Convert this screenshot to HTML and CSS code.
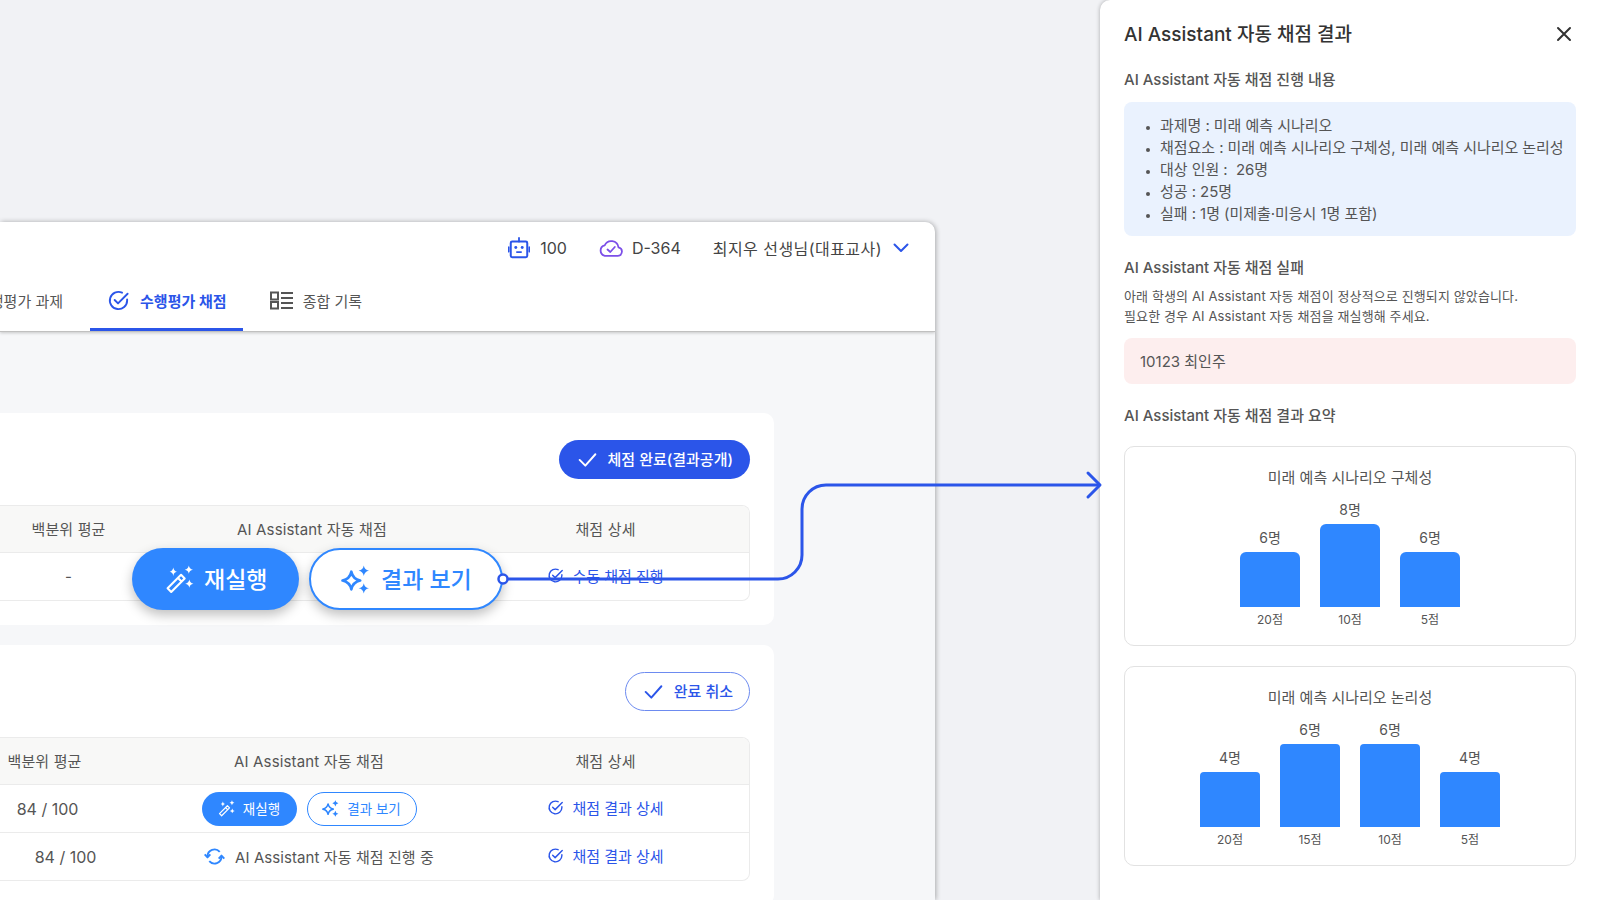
FILE: index.html
```html
<!DOCTYPE html>
<html lang="ko">
  <head>
    <title>AI Assistant 자동 채점 결과</title>
    <link rel="stylesheet" href="styles.css">
  </head>
  <body>
    <svg class="sprites" width="0" height="0">
      <symbol id="check-circle" viewBox="0 0 24 24">
        <path d="M21 11v1a9 9 0 1 1-5.300-8.200" fill="none" stroke="currentColor" stroke-width="2" stroke-linecap="round"/>
        <path d="M8 11.500l3.500 3.500L21.500 5" fill="none" stroke="currentColor" stroke-width="2" stroke-linecap="round" stroke-linejoin="round"/>
      </symbol>
      <symbol id="check" viewBox="0 0 24 24">
        <path d="M3 12.500l6.500 6.500L21 6" fill="none" stroke="currentColor" stroke-width="2.200" stroke-linecap="round" stroke-linejoin="round"/>
      </symbol>
      <symbol id="wand" viewBox="0 0 28 28">
        <path d="M2.500 22.500L15.500 9.500l3.500 3.500L6 26zM12.500 12.500l3.500 3.500" fill="none" stroke="currentColor" stroke-width="2" stroke-linejoin="round"/>
        <path d="M8 2.500Q8.500 6 11.500 6.500 8.500 7 8 10.500 7.500 7 4.500 6.500 7.500 6 8 2.500zM23 0.500Q23.500 4 27 4.500 23.500 5 23 8.500 22.500 5 19 4.500 22.500 4 23 0.500zM23.500 14Q24 17.500 27.500 18 24 18.500 23.500 22 23 18.500 19.500 18 23 17.500 23.500 14z" fill="currentColor"/>
      </symbol>
      <symbol id="sparkles" viewBox="0 0 28 28">
        <path d="M10 6.500Q11.500 13.500 18.500 15 11.500 16.500 10 23.500 8.500 16.500 1.500 15 8.500 13.500 10 6.500z" fill="none" stroke="currentColor" stroke-width="2.600" stroke-linejoin="round"/>
        <path d="M22 0.500Q22.700 4.800 27 5.500 22.700 6.200 22 10.500 21.300 6.200 17 5.500 21.300 4.800 22 0.500zM22 17.500Q22.700 21.800 27 22.500 22.700 23.200 22 27.500 21.300 23.200 17 22.500 21.300 21.800 22 17.500z" fill="currentColor"/>
      </symbol>
    </svg>

    <div class="stage">
      <div class="app">
        <header class="app-head">
          <div class="topbar">
            <svg class="ic-robot" viewBox="0 0 24 24">
              <path d="M12 1v4" stroke="currentColor" stroke-width="2" stroke-linecap="round"/>
              <rect x="3" y="5" width="18" height="17" rx="1.500" fill="none" stroke="currentColor" stroke-width="2.200"/>
              <path d="M0.800 11v5M23.200 11v5" stroke="currentColor" stroke-width="1.800" stroke-linecap="round"/>
              <circle cx="8.500" cy="11.500" r="1.600" fill="currentColor"/>
              <circle cx="15.500" cy="11.500" r="1.600" fill="currentColor"/>
              <path d="M9 16.500h6" stroke="currentColor" stroke-width="1.800"/>
            </svg>
            <span class="top-num">100</span>
            <svg class="ic-cloud" viewBox="0 0 24 18">
              <path d="M5.800 16.800h12.700a4.300 4.300 0 0 0 1-8.500 7.300 7.300 0 0 0-13.800-2A5.400 5.400 0 0 0 5.800 16.800z" fill="none" stroke="currentColor" stroke-width="1.800" stroke-linejoin="round"/>
              <path d="M8.500 10.500l2.800 2.500 4.500-5" fill="none" stroke="currentColor" stroke-width="1.800" stroke-linecap="round" stroke-linejoin="round"/>
            </svg>
            <span class="top-num">D-364</span>
            <span class="top-user">최지우 선생님(대표교사)</span>
            <svg class="ic-chevron" viewBox="0 0 16 10">
              <path d="M1.500 1.500L8 8l6.500-6.500" fill="none" stroke="currentColor" stroke-width="2" stroke-linecap="round" stroke-linejoin="round"/>
            </svg>
          </div>
          <nav class="tabs">
            <a class="tab">
              <svg class="tab-icon"><use href="#check-circle"/></svg>
              수행평가 과제
            </a>
            <a class="tab tab-on">
              <svg class="tab-icon"><use href="#check-circle"/></svg>
              수행평가 채점
            </a>
            <a class="tab">
              <svg class="tab-icon" viewBox="0 0 23 18">
                <path d="M1 1h7v7H1zM1 10.500h7v6.500H1z" fill="none" stroke="currentColor" stroke-width="2"/>
                <path d="M11 1.500h12M11 6.500h12M11 11.500h12M11 16.500h12" stroke="currentColor" stroke-width="1.800"/>
              </svg>
              종합 기록
            </a>
          </nav>
        </header>

        <main class="content">
          <section class="card">
            <div class="card-actions">
              <button class="pill pill-solid">
                <svg class="pill-icon"><use href="#check"/></svg>
                체점 완료(결과공개)
              </button>
            </div>
            <div class="table table-a">
              <div class="row row-head">
                <div>백분위 평균</div>
                <div>AI Assistant 자동 채점</div>
                <div>채점 상세</div>
              </div>
              <div class="row">
                <div>-</div>
                <div></div>
                <div><a class="link"><svg class="link-icon"><use href="#check-circle"/></svg>수동 채점 진행</a></div>
              </div>
            </div>
          </section>

          <section class="card">
            <div class="card-actions">
              <button class="pill pill-line">
                <svg class="pill-icon"><use href="#check"/></svg>
                완료 취소
              </button>
            </div>
            <div class="table table-b">
              <div class="row row-head">
                <div class="pull-head">백분위 평균</div>
                <div>AI Assistant 자동 채점</div>
                <div>채점 상세</div>
              </div>
              <div class="row">
                <div class="num pull-cell">84 / 100</div>
                <div class="btn-cell">
                  <button class="mini mini-solid"><svg class="mini-icon"><use href="#wand"/></svg>재실행</button>
                  <button class="mini mini-line"><svg class="mini-icon"><use href="#sparkles"/></svg>결과 보기</button>
                </div>
                <div><a class="link"><svg class="link-icon"><use href="#check-circle"/></svg>채점 결과 상세</a></div>
              </div>
              <div class="row">
                <div class="num">84 / 100</div>
                <div class="running">
                  <svg class="ic-sync" viewBox="0 0 24 24">
                    <path d="M4 12a8 8 0 0 1 14-5.300M20 12a8 8 0 0 1-14 5.300" fill="none" stroke="currentColor" stroke-width="2.200"/>
                    <path d="M0.800 9.500L4 13l3.200-3.500M16.800 14.500L20 11l3.200 3.500" fill="none" stroke="currentColor" stroke-width="2.200" stroke-linejoin="round"/>
                  </svg>
                  AI Assistant 자동 채점 진행 중
                </div>
                <div><a class="link"><svg class="link-icon"><use href="#check-circle"/></svg>채점 결과 상세</a></div>
              </div>
            </div>
          </section>
        </main>
      </div>

      <aside class="panel">
        <div class="panel-top">
          <h2 class="panel-title">AI Assistant 자동 채점 결과</h2>
          <svg class="ic-close" viewBox="0 0 16 16">
            <path d="M2 2l12 12M14 2L2 14" stroke="currentColor" stroke-width="2" stroke-linecap="round"/>
          </svg>
        </div>

        <h3 class="sec-title sec-shift">AI Assistant 자동 채점 진행 내용</h3>
        <ul class="info-box">
          <li>과제명 : 미래 예측 시나리오</li>
          <li>채점요소 : 미래 예측 시나리오 구체성, 미래 예측 시나리오 논리성</li>
          <li>대상 인원 :&nbsp; 26명</li>
          <li>성공 : 25명</li>
          <li>실패 : 1명 (미제출·미응시 1명 포함)</li>
        </ul>

        <h3 class="sec-title sec-shift">AI Assistant 자동 채점 실패</h3>
        <p class="fail-text">아래 학생의 AI Assistant 자동 채점이 정상적으로 진행되지 않았습니다.<br>필요한 경우 AI Assistant 자동 채점을 재실행해 주세요.</p>
        <div class="fail-box">10123 최인주</div>

        <h3 class="sec-title sec-summary">AI Assistant 자동 채점 결과 요약</h3>
        <div class="chart">
          <div class="chart-title">미래 예측 시나리오 구체성</div>
          <div class="bars">
            <div class="bar-col"><span class="bar-val">6명</span><div class="bar" style="height:55px"></div><span class="bar-key">20점</span></div>
            <div class="bar-col"><span class="bar-val">8명</span><div class="bar" style="height:83px"></div><span class="bar-key">10점</span></div>
            <div class="bar-col"><span class="bar-val">6명</span><div class="bar" style="height:55px"></div><span class="bar-key">5점</span></div>
          </div>
        </div>
        <div class="chart">
          <div class="chart-title">미래 예측 시나리오 논리성</div>
          <div class="bars">
            <div class="bar-col"><span class="bar-val">4명</span><div class="bar bar-sm" style="height:55px"></div><span class="bar-key">20점</span></div>
            <div class="bar-col"><span class="bar-val">6명</span><div class="bar bar-sm" style="height:83px"></div><span class="bar-key">15점</span></div>
            <div class="bar-col"><span class="bar-val">6명</span><div class="bar bar-sm" style="height:83px"></div><span class="bar-key">10점</span></div>
            <div class="bar-col"><span class="bar-val">4명</span><div class="bar bar-sm" style="height:55px"></div><span class="bar-key">5점</span></div>
          </div>
        </div>
      </aside>

      <!-- enlarged buttons and the connector lie over the table -->
      <button class="big big-solid"><svg class="big-icon"><use href="#wand"/></svg>재실행</button>
      <button class="big big-line"><svg class="big-icon"><use href="#sparkles"/></svg>결과 보기</button>
      <svg class="connector" width="1600" height="900" viewBox="0 0 1600 900">
        <path d="M503 579H778a24 24 0 0 0 24-24V509a24 24 0 0 1 24-24H1098" fill="none" stroke="#2b55e9" stroke-width="3"/>
        <path d="M1088 473l12 12-12 12" fill="none" stroke="#2b55e9" stroke-width="3" stroke-linecap="round" stroke-linejoin="round"/>
        <circle cx="503" cy="579" r="4.500" fill="#fff" stroke="#2b55e9" stroke-width="2.500"/>
      </svg>
    </div>
  </body>
</html>
```

FILE: styles.css
```css
* {
  box-sizing: border-box;
}
html, body {
  margin: 0;
  padding: 0;
}
body {
  font-family: Inter, "Noto Sans CJK KR", sans-serif;
  color: #555;
  background: #f1f2f5;
}
button {
  font-family: inherit;
  cursor: pointer;
}
.sprites {
  position: absolute;
}

.stage {
  position: relative;
  display: flex;
  align-items: flex-start;
  width: 1600px;
  height: 900px;
  overflow: hidden;
}

/* left window */
.app {
  flex: none;
  width: 935px;
  height: 678px;
  margin-top: 222px;
  overflow: hidden;
  background: #f6f7f9;
  border-top-right-radius: 10px;
  box-shadow: 1px 0 5px rgba(0, 0, 0, 0.3);
}
.app-head {
  background: #fff;
  border-bottom: 1px solid #c0c0c0;
  box-shadow: 0 1px 3px rgba(0, 0, 0, 0.2);
}
.topbar {
  display: flex;
  align-items: center;
  justify-content: flex-end;
  height: 51px;
  padding-right: 26px;
  font-size: 16px;
  color: #444;
}
.ic-robot {
  width: 22px;
  height: 22px;
  margin-right: 10px;
  color: #2b55e9;
}
.top-num {
  margin-right: 32px;
}
.top-user {
  letter-spacing: 0.45px;
}
.ic-cloud {
  width: 24px;
  height: 18px;
  margin-right: 9px;
  color: #7c4fe8;
}
.ic-chevron {
  width: 16px;
  height: 10px;
  margin-left: 11px;
  color: #2b55e9;
}
.tabs {
  display: flex;
  gap: 11px;
  height: 58px;
  margin-left: -73px;
}
.tab {
  display: flex;
  align-items: center;
  gap: 10px;
  padding: 0 16px;
  font-size: 15px;
  color: #555;
  border-bottom: 3px solid transparent;
}
.tab-on {
  padding-left: 17px;
  font-weight: 600;
  color: #2b55e9;
  border-bottom-color: #2b55e9;
}
.tab-icon {
  width: 23px;
  height: 23px;
}

.content {
  display: flex;
  flex-direction: column;
  gap: 20px;
  padding: 81px 161px 0 0;
}
.card {
  padding: 27px 24px 24px 0;
  background: #fff;
  border-radius: 0 10px 10px 0;
}
.card-actions {
  display: flex;
  justify-content: flex-end;
  margin-bottom: 26px;
}
.pill {
  display: flex;
  align-items: center;
  gap: 10px;
  height: 39px;
  padding: 0 17px 2px 18px;
  font-size: 15px;
  font-weight: 500;
  border-radius: 20px;
}
.pill-solid {
  color: #fff;
  background: #2b55e9;
  border: 0;
}
.pill-line {
  padding: 0 16px 2px 17px;
  color: #2b55e9;
  background: #fff;
  border: 1px solid #6d8bf0;
}
.pill-icon {
  width: 21px;
  height: 21px;
  margin-top: 2px;
}

.table {
  border: 1px solid #ebebeb;
  border-left: 0;
  border-radius: 0 8px 8px 0;
  overflow: hidden;
  font-size: 15px;
}
.row {
  display: grid;
  align-items: center;
  height: 48px;
  text-align: center;
  border-top: 1px solid #ebebeb;
}
.row-head {
  height: 46px;
  padding-bottom: 2px;
  letter-spacing: 0.15px;
  background: #f8f8f7;
  border-top: 0;
}
.table-a .row {
  grid-template-columns: 137px 350px 237px;
}
.table-b .row {
  grid-template-columns: 131px 356px 237px;
}
.num {
  font-size: 16px;
}
.pull-head {
  padding-right: 42px;
}
.pull-cell {
  padding-right: 36px;
}
.link {
  display: inline-flex;
  align-items: center;
  gap: 8px;
  color: #2b55e9;
}
.link-icon {
  width: 17px;
  height: 17px;
  flex: none;
}
.btn-cell {
  display: flex;
  justify-content: center;
  gap: 10px;
}
.mini {
  display: flex;
  align-items: center;
  justify-content: center;
  gap: 8px;
  height: 34px;
  padding: 0 0 2px;
  font-size: 13.5px;
  border-radius: 17px;
}
.mini-solid {
  width: 95px;
  color: #fff;
  background: #2f87ff;
  border: 0;
}
.mini-line {
  width: 110px;
  color: #2f87ff;
  background: #fff;
  border: 1px solid #2f87ff;
}
.mini-icon {
  width: 17px;
  height: 17px;
  margin-top: 2px;
}
.running {
  display: flex;
  align-items: center;
  justify-content: center;
  gap: 10px;
  padding-left: 20px;
  letter-spacing: 0.08px;
}
.ic-sync {
  width: 21px;
  height: 21px;
  color: #2f87ff;
}

/* right panel */
.panel {
  flex: none;
  width: 500px;
  height: 900px;
  margin-left: 165px;
  padding: 20px 24px 0;
  background: #fff;
  border-top-left-radius: 10px;
  box-shadow: 0 0 4px rgba(0, 0, 0, 0.3);
}
.panel-top {
  display: flex;
  align-items: center;
  justify-content: space-between;
  height: 28px;
}
.panel-title {
  margin: 0;
  padding-top: 1px;
  font-size: 19px;
  font-weight: 500;
  line-height: 28px;
  color: #333;
}
.ic-close {
  width: 16px;
  height: 16px;
  margin-right: 4px;
  color: #333;
}
.sec-title {
  margin: 20px 0 0;
  font-size: 15px;
  font-weight: 500;
  line-height: 22px;
  color: #555;
}
.sec-shift {
  padding-top: 1px;
  height: 22px;
}
.sec-summary {
  margin-top: 21px;
}
.info-box {
  margin: 12px 0 0;
  padding: 13px 0 11px 36px;
  font-size: 15px;
  line-height: 22px;
  letter-spacing: -0.05px;
  white-space: nowrap;
  background: #eaf2fe;
  border-radius: 8px;
}
.info-box li::marker {
  font-size: 11px;
}
.fail-text {
  margin: 8px 0 0;
  font-size: 13px;
  line-height: 20px;
  letter-spacing: 0.12px;
}
.fail-box {
  height: 46px;
  margin-top: 12px;
  padding: 1px 0 0 16px;
  font-size: 15px;
  line-height: 46px;
  background: #fdeeee;
  border-radius: 8px;
}
.chart {
  height: 200px;
  margin-top: 20px;
  padding-top: 21px;
  border: 1px solid #e2e2e2;
  border-radius: 10px;
}
.sec-summary + .chart {
  margin-top: 19px;
}
.chart-title {
  font-size: 15px;
  line-height: 20px;
  text-align: center;
}
.bars {
  display: flex;
  align-items: flex-end;
  justify-content: center;
  gap: 20px;
  height: 129px;
  margin-top: 12px;
}
.bar-col {
  display: flex;
  flex-direction: column;
  align-items: center;
  width: 60px;
}
.bar-val {
  margin-bottom: 4px;
  font-size: 14px;
  line-height: 20px;
}
.bar {
  width: 60px;
  background: #2f87ff;
  border-radius: 6px 6px 0 0;
}
.bar-sm {
  border-radius: 4px 4px 0 0;
}
.bar-key {
  margin-top: 4px;
  font-size: 12px;
  line-height: 18px;
}

/* overlay */
.big {
  position: absolute;
  top: 548px;
  display: flex;
  align-items: center;
  height: 62px;
  font-size: 23px;
  font-weight: 500;
  border-radius: 31px;
  box-shadow: 0 5px 12px rgba(0, 0, 0, 0.25);
}
.big-solid {
  left: 132px;
  width: 167px;
  padding: 0 0 2px 33px;
  gap: 10px;
  color: #fff;
  background: #2f87ff;
  border: 0;
}
.big-line {
  left: 309px;
  width: 194px;
  padding: 0 0 2px 30px;
  gap: 11px;
  color: #2f87ff;
  background: #fff;
  border: 2px solid #2f87ff;
}
.big-icon {
  width: 29px;
  height: 29px;
  margin-top: 2px;
}
.connector {
  position: absolute;
  top: 0;
  left: 0;
  pointer-events: none;
}
```
